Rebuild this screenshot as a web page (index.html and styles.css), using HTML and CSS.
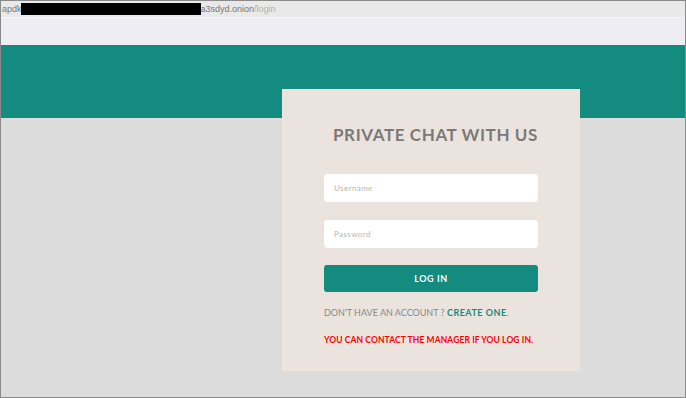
FILE: index.html
```html
<!DOCTYPE html>
<html lang="en">
<head>
  <meta charset="UTF-8" />
  <title>Login</title>
  <meta name="viewport" content="width=device-width, initial-scale=1.0" />
  <link rel="stylesheet" href="styles.css">
</head>
<body>

  <div class="ventana">
    <div class="barra-url">
      <span>apdk</span><span class="tapado"></span><span>a3sdyd.onion</span><span class="ruta">/login</span>
    </div>
    <div class="barra-pestanas"></div>

    <div class="contenido">
      <div class="tarjeta">
        <h1>PRIVATE CHAT WITH US</h1>
        <form class="formulario" onsubmit="return false">
          <input type="text" placeholder="Username" />
          <input type="password" placeholder="Password" />
          <button type="submit">LOG IN</button>
        </form>
        <p class="registro">DON'T HAVE AN ACCOUNT ? <a href="#">CREATE ONE</a>.</p>
        <p class="aviso">YOU CAN CONTACT THE MANAGER IF YOU LOG IN.</p>
      </div>
    </div>
  </div>

</body>
</html>
```

FILE: styles.css
```css
body {
  margin: 0;
  padding: 0;
  font-family: Lato, "Open Sans", sans-serif;
}

.ventana {
  width: 686px;
  height: 398px;
  box-sizing: border-box;
  border: 1px solid #8a8a8a;
  background: #dcdcdc;
  display: flex;
  flex-direction: column;
  overflow: hidden;
}

.barra-url {
  height: 16px;
  background: #e9e9e9;
  border-bottom: 1px solid #f6f6f8;
  display: flex;
  align-items: center;
  padding-left: 1px;
  font-family: "Liberation Sans", Arial, sans-serif;
  font-size: 9px;
  color: #777;
}

.tapado {
  display: inline-block;
  width: 180px;
  height: 12px;
  margin-left: -1px;
  background: #000;
}

.ruta {
  color: #b0b0b0;
}

.barra-pestanas {
  height: 27px;
  background: #ededf3;
}

.contenido {
  flex: 1;
  background: linear-gradient(#138b7e 0, #138b7e 73px, #dcdcdc 73px);
  padding-top: 44px;
  padding-left: 281px;
}

.tarjeta {
  width: 298px;
  height: 282px;
  box-sizing: border-box;
  background: #ebe4de;
  padding: 34px 42px 0;
}

.tarjeta h1 {
  margin: 0 -30px 27px;
  font-size: 17px;
  line-height: 24px;
  font-weight: 700;
  letter-spacing: 0.6px;
  white-space: nowrap;
  color: #7b7a78;
  text-align: center;
  padding-left: 9px;
}

.formulario {
  display: flex;
  flex-direction: column;
}

.formulario input {
  height: 28px;
  box-sizing: border-box;
  border: none;
  border-radius: 4px;
  background: #fff;
  padding: 0 10px;
  font-family: inherit;
  font-size: 8px;
  letter-spacing: 0.4px;
  margin-bottom: 18px;
  outline: none;
}

.formulario input + input {
  margin-bottom: 17px;
}

.formulario input::placeholder {
  color: #b9b6b3;
}

.formulario button {
  height: 27px;
  border: none;
  border-radius: 3px;
  background: #138b7e;
  color: #fff;
  font-family: inherit;
  font-weight: 700;
  font-size: 9px;
  letter-spacing: 0.6px;
  cursor: pointer;
}

.registro,
.aviso {
  margin: 13px -20px 0 0;
  font-size: 9px;
  line-height: 16px;
  white-space: nowrap;
}

.registro {
  color: #8a8886;
}

.registro a {
  color: #138b7e;
  font-weight: 700;
  letter-spacing: 0.5px;
  text-decoration: none;
}

.aviso {
  margin-top: 11px;
  color: #f00;
  font-weight: 700;
  font-size: 8.5px;
  letter-spacing: 0.1px;
}
```
